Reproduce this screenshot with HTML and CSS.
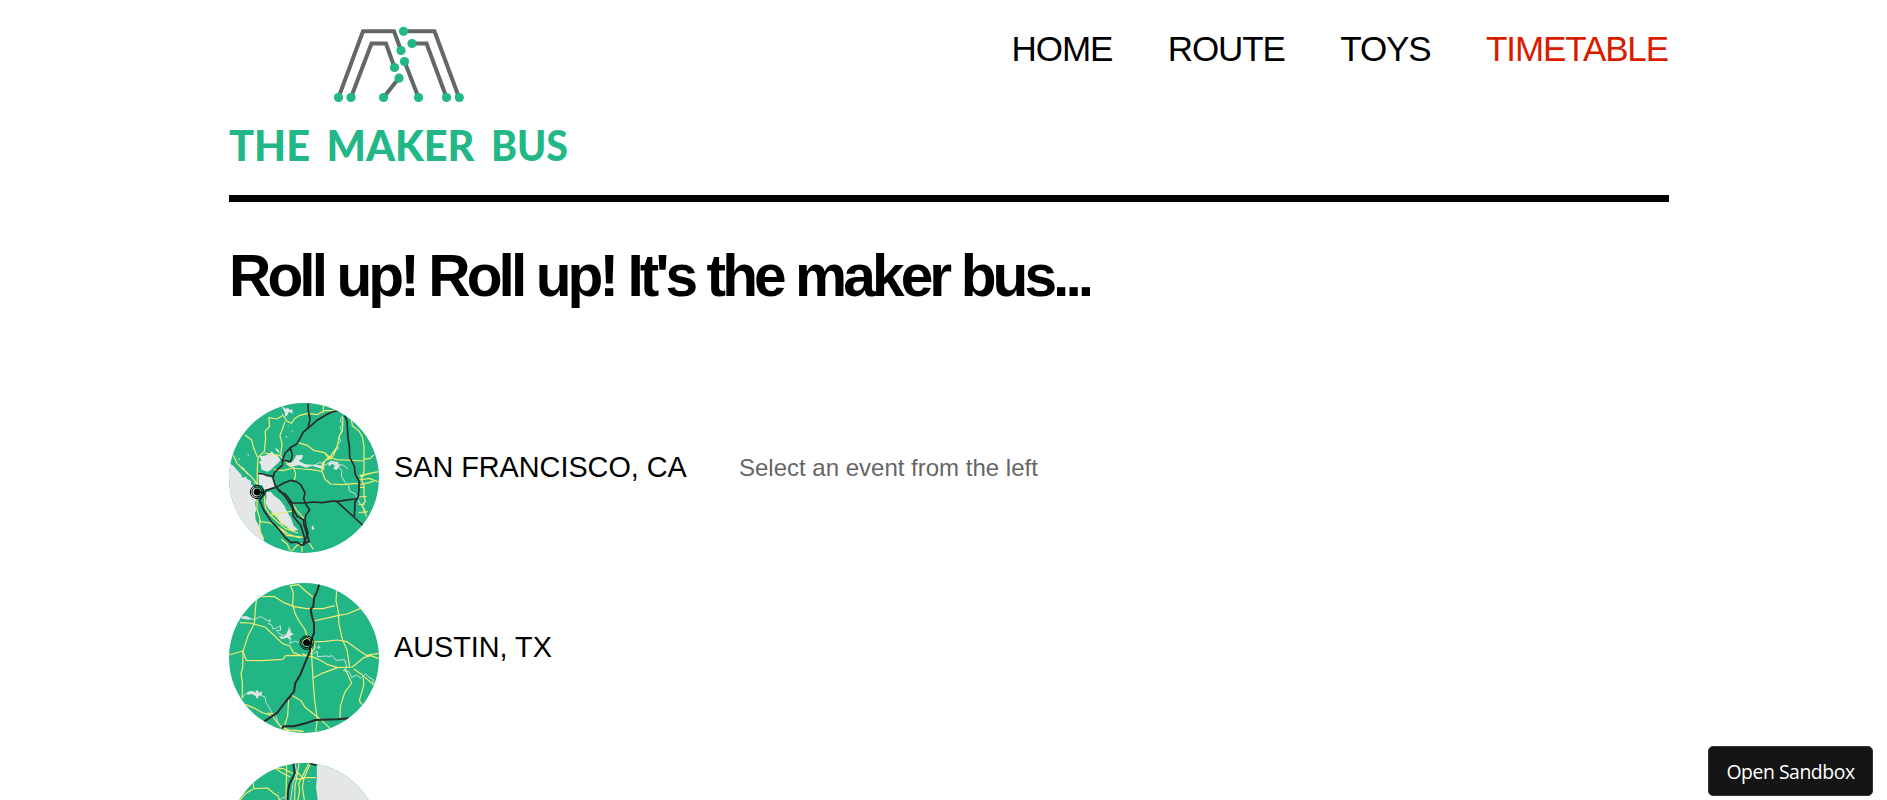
FILE: index.html
```html
<!DOCTYPE html>
<html lang="en">
<head>
<meta charset="utf-8">
<title>The Maker Bus</title>
<link rel="stylesheet" href="styles.css">
</head>
<body>
<div class="page">
  <header class="header">
    <svg class="logo" viewBox="229 20 340 150" role="img" aria-label="The Maker Bus">
      <g class="logo-lines">
        <path d="M338.5 97.500L363 31.200H394L401 50.500"/>
        <path d="M351 97.500L371.500 43.500H386L394.500 67.500"/>
        <path d="M403.500 31.200H434.500L459 97.500"/>
        <path d="M412 43.500H426.500L446.500 97.500"/>
        <path d="M404.500 61.500L418.500 97.500"/>
        <path d="M399 78L383.500 97.500"/>
      </g>
      <g class="logo-dots">
        <circle cx="338.500" cy="97.500" r="4.600"/><circle cx="351" cy="97.500" r="4.600"/>
        <circle cx="383.500" cy="97.500" r="4.600"/><circle cx="418.500" cy="97.500" r="4.600"/>
        <circle cx="446.500" cy="97.500" r="4.600"/><circle cx="459.300" cy="97.500" r="4.600"/>
        <circle cx="403.500" cy="31.300" r="4.600"/><circle cx="412" cy="43.500" r="4.600"/>
        <circle cx="401" cy="50.500" r="4.600"/><circle cx="404.500" cy="61.500" r="4.600"/>
        <circle cx="394.500" cy="67.500" r="4.600"/><circle cx="399" cy="78.200" r="4.600"/>
      </g>
      <g class="logo-text">
        <text x="229" y="160.500" textLength="81" lengthAdjust="spacingAndGlyphs">THE</text>
        <text x="326.500" y="160.500" textLength="148" lengthAdjust="spacingAndGlyphs">MAKER</text>
        <text x="491" y="160.500" textLength="77" lengthAdjust="spacingAndGlyphs">BUS</text>
      </g>
    </svg>
    <nav class="nav">
      <a>HOME</a><a>ROUTE</a><a>TOYS</a><a class="active">TIMETABLE</a>
    </nav>
  </header>
  <h1 class="title">Roll up! Roll up! It's the maker bus...</h1>
  <main class="content">
    <ul class="events">
      <li class="event">
        <svg class="map" viewBox="21 21 450 450">
          <rect class="land" x="21" y="21" width="450" height="450"/>
          <g class="water">
            <path d="M21 200L34 209L45 222L58 236L60 245L73 242L74 248L86 254L88 266L97 272L108 296L103 310L99 322L103 343L99 350L101 372L112 391L118 411L126 432L124 471H21Z"/>
            <path d="M112 180L127 179L143 173L149 166L157 175L168 181L176 193L165 204L154 214L146 222L137 227L119 221L116 205L111 199L118 193Z"/>
            <path d="M110 229L124 232L143 242L153 248L159 271L144 280L133 281L126 280L121 267L111 267Z"/>
            <path d="M133 288L147 287L155 298L173 311L187 329L195 347L207 366L215 389L229 402L213 404L200 399L195 390L180 382L171 371L158 356L137 335L131 320L133 306Z"/>
            <path d="M177 27L190 38L200 36L202 42L211 40L212 53L201 47L196 58L190 62L188 48L183 38Z"/>
            <path d="M193 205L213 196L223 178L243 177L240 188L230 195L250 205L285 207L310 210L299 218L269 209L252 215L231 207L205 214Z"/>
            <path d="M318 204L326 194L347 198L354 209L344 222L334 218L339 208L328 204L323 212Z"/>
            <path d="M158 154L169 161L174 173L166 167Z"/>
            <path d="M56 211L66 217L70 225L60 220ZM72 224L79 233L75 236ZM47 186L56 189L53 192ZM74 176L81 175V179ZM191 119L196 122L192 126ZM208 104L213 105L210 109ZM270 388L278 397L274 402L269 400ZM97 256L101 263L97 262ZM198 88L201 91H198Z"/>
          </g>
          <g class="river">
            <path d="M361 60L354 76L364 84L353 95L362 105L350 122L357 136L345 148L350 157L333 169L325 183L309 193L300 204"/>
            <path d="M253 211L276 208L294 199L311 207L328 195L343 207L363 207L378 219M348 211L360 225L358 240L369 259L380 268L382 285L399 293L406 304L414 324L426 336L425 352"/>
          </g>
          <g class="roads">
            <path d="M181 55L195 75L208 82L217 69L231 59L258 52L285 56L307 44L345 44M304 22V50"/>
            <path d="M140 65L165 69L181 59M189 76L181 100L174 118L180 144L176 178M140 65L143 91L129 107L131 126L127 166L108 184L106 222L105 286"/>
            <path d="M69 117L89 132L94 153L106 183M34 178L45 202L66 222L87 241L106 264"/>
            <path d="M127 171L149 174L172 178L183 187M183 187L196 202L215 215M155 220L183 224L213 216L241 219L270 221L300 226L309 250L326 264L362 266L393 263L411 263"/>
            <path d="M215 215L221 234L217 252M228 140L255 148L275 163L307 170L318 183L344 191L425 195M307 170L322 182L300 203L306 222M345 152L334 180L308 195L300 221L298 229"/>
            <path d="M363 64L361 101L351 124L346 151L318 192"/>
            <path d="M387 65L391 89L411 105L421 123L426 151V229L418 250L426 270V300L430 314L421 329L430 350L433 362M426 190L445 187L455 177M415 243L438 233L470 227M412 239L445 233M411 252L442 247L470 258M416 266L455 256M411 274H428M410 303L434 301M410 325H428M410 349L437 347"/>
            <path d="M209 320L224 343L246 368M105 310L105 340L116 377L145 381L178 399L199 414L233 426M127 301L130 335L145 357L174 352L217 344M145 357L166 377L189 397L228 411M134 355L155 386L178 403L195 418L246 424M113 373L114 407L125 428M178 430L196 445L205 464M208 466L225 448L240 443V468M258 435L274 460"/>
            <path d="M148 349L166 364L178 382L193 391L216 405"/>
          </g>
          <g class="highways">
            <path d="M258 22L259 45L264 69L258 96L243 109L233 129L225 143L207 154L190 171L181 193L182 207L168 219L157 230L153 247L160 269L174 288L190 294L209 319L215 342L225 360L244 371L246 388L262 437L251 440"/>
            <path d="M257 98L285 73L313 56L330 48L351 43"/>
            <path d="M204 153L211 177L206 197L181 192M109 232L124 234L137 239L153 240"/>
            <path d="M163 274L184 262L206 253L223 257L236 266L249 290L245 308L253 327L263 342L252 356L249 371L252 390L258 413L242 448"/>
            <path d="M105 287L127 292L132 283L160 274M129 292L113 313L127 346L150 379L170 399L190 425L207 440L225 438L239 448L250 443L245 416L236 388L214 361L211 335L191 303L171 281"/>
            <path d="M198 315L212 321L247 321L275 318L301 320L332 315L346 316L398 309L409 309"/>
            <path d="M345 317L368 338L402 369L424 389"/>
            <path d="M368 58L375 75L378 126L382 150L383 183L397 211L400 236L411 255V277L409 301L399 318L397 361"/>
          </g>
          <g class="pin" transform="translate(105 288)"><circle r="20"/><circle r="15"/><circle class="pin-core" r="9"/></g>
        </svg>
        <span class="city">SAN FRANCISCO, CA</span>
      </li>
      <li class="event">
        <svg class="map" viewBox="21 21 450 450">
          <rect class="land" x="21" y="21" width="450" height="450"/>
          <path class="water" d="M55 122L72 120L88 127L79 131L61 128ZM76 348L90 344L98 351L105 341L112 350L120 346L119 356L110 360L106 370L100 359L88 354L76 357ZM191 181L201 155L205 168L215 175L203 181L210 191L194 185L178 190L171 180L185 183L192 171Z"/>
          <g class="river">
            <path d="M60 122L79 128L98 130L116 121L136 134L146 132L139 143L149 147L153 160L166 155L175 149L176 163L163 164L172 174L184 177L179 187L199 184L205 194L203 203L217 196L233 199L247 207L270 224L268 236L286 226L286 242L312 240L325 242L328 237L343 253L368 251L375 274L364 284L380 286L389 304L404 297L416 307L430 293L440 303L454 311L452 325"/>
            <path d="M60 367L70 353L84 351L94 347L114 357L129 363L133 382L142 395L149 410L162 421L170 446L182 461"/>
            <path d="M286 214L296 215M291 208L290 219M199 153L207 163L201 174"/>
          </g>
          <g class="roads">
            <path d="M104 61L158 62L184 79L216 92L254 98L302 98L338 89M205 28L214 50L212 84L219 112L232 137L248 159L254 177L266 198M207 29L230 26L247 42L277 67"/>
            <path d="M344 40L342 75L349 108L351 145L361 190L375 221L383 274M274 135L311 127L350 118L375 114L414 98"/>
            <path d="M104 65L100 100L97 143L79 177L63 226L62 275L57 293L61 320L61 367"/>
            <path d="M53 140L82 141L129 153L155 177L182 203L204 210L214 230L235 237M22 237L62 225L73 253L115 254L182 250L191 239L218 238L252 240L272 243"/>
            <path d="M270 198L309 196L346 192L375 197L408 221L433 238L470 232M269 241L294 252L315 265L348 275L391 273L425 245L446 239L470 248"/>
            <path d="M268 215L269 240L273 310L278 374L286 430L281 466M274 306L300 292L347 275M370 280L389 321L368 350L355 391L354 429M424 305L425 328L412 374L420 386M395 279L416 293L437 311L455 326"/>
            <path d="M208 357L237 374L249 394L289 425L325 457M200 365L197 420L184 459M70 385L100 398L123 411L150 419L169 444L191 463H225L246 468"/>
            <path d="M180 453L204 464L243 465M136 411L162 415"/>
            <path d="M240 233L252 238L268 230L280 214L271 193L260 184L241 195L237 207"/>
          </g>
          <g class="highways thick">
            <path d="M292 23L285 47L276 66L274 91L266 100L269 118L276 142L276 171L266 198L264 225L252 254L235 296L220 321L216 347L190 378L166 410L127 436"/>
            <path d="M180 458L185 451L216 451L250 442L280 432L345 430L382 427"/>
          </g>
          <g class="pin" transform="translate(254 200)"><circle r="20"/><circle r="15"/><circle class="pin-core" r="9"/></g>
        </svg>
        <span class="city">AUSTIN, TX</span>
      </li>
      <li class="event">
        <svg class="map" viewBox="21 24 450 450">
          <rect class="land" x="21" y="24" width="450" height="450"/>
          <path class="water" d="M284 24H471V474H300L287 135L282 96L285 65ZM257 78L262 77V82Z"/>
          <g class="river"><path d="M220 28L224 54L214 78L210 105L206 135M173 134L190 125M169 112L170 114"/></g>
          <g class="roads">
            <path d="M139 37L163 42L177 52L204 66M158 39L184 41L216 57M93 83L96 101L137 99L154 114L168 123L173 136M93 102L68 118L54 136M194 24L192 138"/>
            <path d="M231 25L224 69L219 95L218 135M260 26L243 60L230 86L233 106L228 135M265 26L247 66L241 96L247 135M225 50L242 68H283M216 72L245 71"/>
          </g>
          <g class="highways thick"><path d="M214 24L218 52L212 69L202 88L198 111L197 138M262 24L284 31"/></g>
        </svg>
      </li>
    </ul>
    <p class="hint">Select an event from the left</p>
  </main>
</div>
<a class="sandbox">Open Sandbox</a>
</body>
</html>
```
FILE: styles.css
```css
* { box-sizing: border-box; }
body {
  margin: 0;
  height: 100vh;
  overflow: hidden;
  background: #fff;
  color: #000;
  font-family: "Liberation Sans", Arial, sans-serif;
}
.page { width: 1440px; height: 100vh; margin-left: 229px; overflow: hidden; }
.header {
  display: flex;
  justify-content: space-between;
  align-items: flex-start;
  height: 202px;
  padding-top: 20px;
  border-bottom: 7px solid #000;
}
.logo { width: 340px; height: 150px; }
.logo-lines { fill: none; stroke: #636765; stroke-width: 4; }
.logo-dots { fill: #22b787; }
.logo-text { fill: #22b787; font-family: Lato, sans-serif; font-size: 41.5px; font-weight: 900; }
.nav {
  display: flex;
  gap: 55.5px;
  padding: 9px 1px 0 0;
  font-size: 35px;
  line-height: 40px;
  letter-spacing: -1.1px;
}
.active { color: #d91b00; }
.title {
  margin: 41px 0 0;
  font-size: 58.6px;
  line-height: 66px;
  letter-spacing: -3.9px;
  white-space: nowrap;
}
.content { display: flex; margin-top: 94px; }
.events {
  display: flex;
  flex-direction: column;
  gap: 30px;
  width: 510px;
  margin: 0;
  padding: 0;
  list-style: none;
}
.event { display: flex; gap: 15px; height: 150px; }
.map { flex: none; width: 150px; height: 150px; border-radius: 50%; }
.city { padding-top: 47px; font-size: 28.8px; line-height: 34px; }
.hint { margin: 50px 0 0; color: #666; font-size: 24px; line-height: 30px; }
.land { fill: #22b585; }
.water { fill: #e4e6e8; }
.river, .roads, .highways { fill: none; stroke-linejoin: round; }
.river { stroke: #c9dfd9; stroke-width: 3; }
.roads { stroke: #f0ec73; stroke-width: 3.6; }
.highways { stroke: #292929; stroke-width: 5; }
.thick { stroke-width: 6; }
.pin { fill: none; stroke: #000; stroke-width: 3; }
.pin-core { fill: #000; }
.sandbox {
  position: fixed;
  left: 1708px;
  top: 746px;
  width: 165px;
  height: 50px;
  border: 1px solid #343434;
  border-radius: 5px;
  background: #151515;
  color: #fff;
  font: 19.4px/50px "Open Sans", "Noto Sans", sans-serif;
  letter-spacing: -0.45px;
  text-align: center;
}
```
